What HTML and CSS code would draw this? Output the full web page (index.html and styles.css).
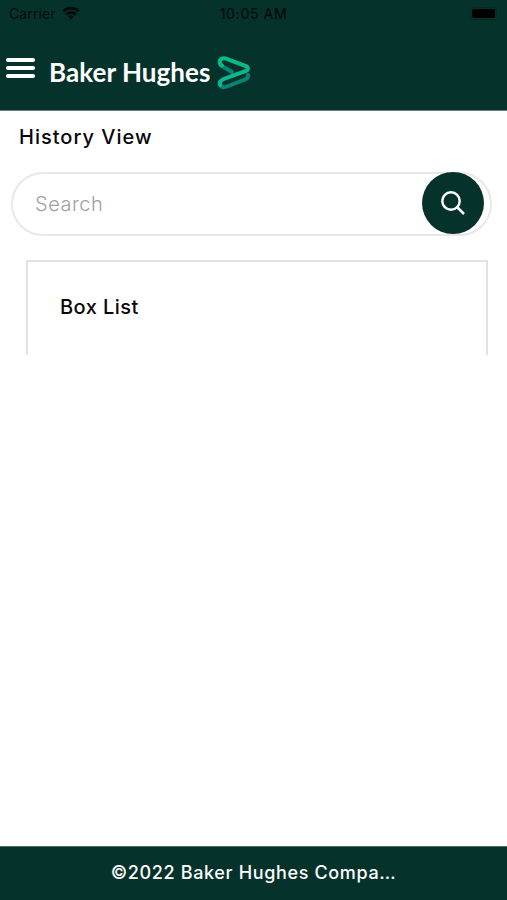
FILE: index.html
```html
<!DOCTYPE html>
<html lang="en">
<head>
<meta charset="utf-8">
<title>History View</title>
<link rel="stylesheet" href="styles.css">
</head>
<body>
<div class="app">
  <header class="header">
    <div class="status">
      <div class="carrier"><span class="carrier-name">Carrier</span>
        <svg class="wifi" viewBox="0 0 18 14" fill="none" stroke="currentColor" stroke-width="2.8"><path d="M1.2 5.3a11.2 11.2 0 0 1 15.6 0M4.1 8.5a7 7 0 0 1 9.8 0"/><path d="M6.2 10.5a4.1 4.1 0 0 1 5.6 0L9 13.4z" fill="currentColor" stroke="none"/></svg>
      </div>
      <time class="time">10:05 AM</time>
      <div class="battery"><span class="battery-fill"></span></div>
    </div>
    <div class="brand">
      <button class="menu" aria-label="Menu"><span></span><span></span><span></span></button>
      <span class="wordmark">Baker Hughes</span>
      <svg class="logo" viewBox="0 0 34 34" fill="none" stroke-width="4" stroke-linejoin="round" stroke-linecap="round">
        <path d="M4 9.500L15 16M31 19C31.500 21 30 22.500 28 23.500L10 30.500C7 31.600 4 31.500 3 28.500" stroke="#078475"/>
        <path d="M5 9.500C1.500 7.500 2 3 6.500 2.300C8 2 9.500 2.700 11 3.300L29 10.200C31.500 11.300 31.500 13.800 29 14.800L7 22.800C3 24.300 2 27 3.200 29" stroke="#08b98b"/>
      </svg>
    </div>
  </header>
  <main class="content">
    <h1 class="title">History View</h1>
    <div class="search">
      <span class="placeholder">Search</span>
      <button class="search-button" aria-label="Search">
        <svg viewBox="0 0 24 24" fill="none" stroke="#fff" stroke-width="2.5"><circle cx="10" cy="10" r="8.700"/><path d="M16 16l7 7"/></svg>
      </button>
    </div>
    <section class="card"><h2 class="card-title">Box List</h2></section>
  </main>
  <footer class="footer"><span class="copyright">©2022 Baker Hughes Compa…</span></footer>
</div>
</body>
</html>
```
FILE: styles.css
```css
* { box-sizing: border-box; }
body { margin: 0; background: #fff; font-family: Inter, "Liberation Sans", sans-serif; color: #080808; }
button { border: 0; padding: 0; background: none; }
.app { height: 900px; display: flex; flex-direction: column; overflow: hidden; }
.header { height: 111px; flex: none; background: #05332c; border-bottom: 1px solid #688580; }
.status { height: 28px; padding: 0 10px 2px 9px; display: grid; grid-template-columns: 1fr auto 1fr; align-items: center; color: #010c0a; font-size: 14px; }
.carrier { display: flex; align-items: center; gap: 6px; }
.carrier-name { letter-spacing: 0.1px; }
.wifi { width: 18px; height: 14px; margin-top: -1px; }
.time { font-weight: 500; font-size: 14px; letter-spacing: 0.55px; padding-left: 1px; }
.battery { justify-self: end; width: 27px; height: 13px; padding: 1px; border: 1px solid #042a24; border-radius: 4px; }
.battery-fill { display: block; height: 9px; background: #000; border-radius: 2px; }
.brand { display: flex; height: 82px; padding-left: 6px; align-items: flex-start; }
.menu { width: 29px; height: 20px; margin-top: 30px; display: flex; flex-direction: column; justify-content: space-between; }
.menu span { display: block; width: 100%; height: 4px; border-radius: 2px; background: #fff; }
.wordmark { width: 168px; margin: 28px 0 0 14px; font: 700 26px/32px Lato, sans-serif; letter-spacing: 0.05px; color: #fff; white-space: nowrap; }
.logo { width: 34px; height: 34px; margin-top: 28px; }
.content { flex: 1; min-height: 0; display: flex; flex-direction: column; }
.title { margin: 11px 0 0 19px; font-size: 20px; line-height: 30px; font-weight: 500; letter-spacing: 1px; }
.search { width: 481px; height: 64px; margin: 20px 0 0 11px; padding: 0 6px 0 22px; border: 2px solid #e8e8e8; border-radius: 32px; display: flex; align-items: center; justify-content: space-between; }
.placeholder { font-size: 20px; font-weight: 300; color: #a0a0a0; letter-spacing: 0.5px; }
.search-button { flex: none; width: 62px; height: 62px; border-radius: 50%; background: #05332c; display: grid; place-items: center; margin-top: -2px; }
.search-button svg { width: 24px; height: 24px; }
.card { width: 462px; height: 95px; margin: 24px 0 0 26px; padding: 31px 0 0 32px; border: 2px solid #e2e2e2; border-bottom: 0; }
.card-title { margin: 0; font-size: 20px; line-height: 28px; font-weight: 500; letter-spacing: 0.45px; }
.footer { height: 54px; flex: none; background: #05332c; border-top: 1px solid #4d706a; color: #fff; text-align: center; }
.copyright { display: block; font-size: 18px; line-height: 51px; font-weight: 500; letter-spacing: 0.65px; white-space: nowrap; }
```
